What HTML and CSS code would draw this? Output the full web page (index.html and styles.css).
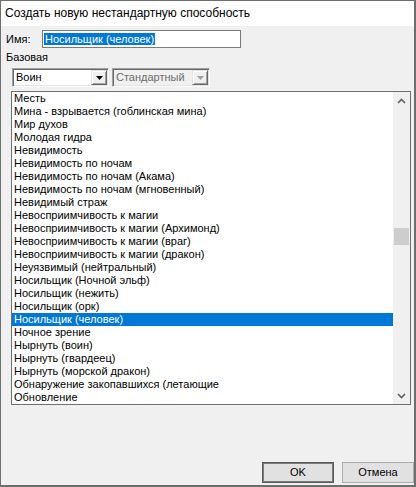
FILE: index.html
```html
<!DOCTYPE html>
<html>
<head>
<meta charset="utf-8">
<link rel="stylesheet" href="styles.css">
</head>
<body>
<div class="window">
  <div class="titlebar">Создать новую нестандартную способность</div>
  <div class="client">
    <div class="name-row">
      <span class="name-label">Имя:</span>
      <div class="textbox"><span class="sel">Носильщик (человек)</span></div>
    </div>
    <div class="base-label">Базовая</div>
    <div class="combo-row">
      <div class="combo combo-race">
        <span class="combo-text">Воин</span>
        <span class="combo-btn"><svg width="7" height="4" viewBox="0 0 7 4"><polygon points="0,0 7,0 3.5,4" fill="#000"/></svg></span>
      </div>
      <div class="combo combo-type disabled">
        <span class="combo-text">Стандартный</span>
        <span class="combo-btn"><svg width="7" height="4" viewBox="0 0 7 4"><polygon points="0,0 7,0 3.5,4" fill="#a0a0a0"/></svg></span>
      </div>
    </div>
    <div class="listbox">
      <div class="items">
        <div class="item">Месть</div>
        <div class="item">Мина - взрывается (гоблинская мина)</div>
        <div class="item">Мир духов</div>
        <div class="item">Молодая гидра</div>
        <div class="item">Невидимость</div>
        <div class="item">Невидимость по ночам</div>
        <div class="item">Невидимость по ночам (Акама)</div>
        <div class="item">Невидимость по ночам (мгновенный)</div>
        <div class="item">Невидимый страж</div>
        <div class="item">Невосприимчивость к магии</div>
        <div class="item">Невосприимчивость к магии (Архимонд)</div>
        <div class="item">Невосприимчивость к магии (враг)</div>
        <div class="item">Невосприимчивость к магии (дракон)</div>
        <div class="item">Неуязвимый (нейтральный)</div>
        <div class="item">Носильщик (Ночной эльф)</div>
        <div class="item">Носильщик (нежить)</div>
        <div class="item">Носильщик (орк)</div>
        <div class="item selected">Носильщик (человек)</div>
        <div class="item">Ночное зрение</div>
        <div class="item">Нырнуть (воин)</div>
        <div class="item">Нырнуть (гвардеец)</div>
        <div class="item">Нырнуть (морской дракон)</div>
        <div class="item">Обнаружение закопавшихся (летающие</div>
        <div class="item">Обновление</div>
      </div>
      <div class="scrollbar">
        <div class="sb-btn"><svg width="9" height="6" viewBox="0 0 9 6"><polyline points="1,5 4.5,1.5 8,5" fill="none" stroke="#606060" stroke-width="1.6"/></svg></div>
        <div class="sb-track"><div class="sb-thumb"></div></div>
        <div class="sb-btn"><svg width="9" height="6" viewBox="0 0 9 6"><polyline points="1,1 4.5,4.5 8,1" fill="none" stroke="#606060" stroke-width="1.6"/></svg></div>
      </div>
    </div>
    <div class="buttons">
      <div class="btn default">OK</div>
      <div class="btn">Отмена</div>
    </div>
  </div>
</div>
</body>
</html>
```

FILE: styles.css
```css
html, body {
  margin: 0;
  padding: 0;
}
body {
  width: 416px;
  height: 487px;
  overflow: hidden;
  font-family: "Liberation Sans", Arial, sans-serif;
  font-size: 11px;
  color: #000;
}
.window {
  box-sizing: border-box;
  width: 416px;
  height: 487px;
  border-top: 1px solid #6e6e6e;
  border-left: 1px solid #6e6e6e;
  border-right: 2px solid #6e6e6e;
  border-bottom: 2px solid #6e6e6e;
  display: flex;
  flex-direction: column;
  background: #f0f0f0;
}
.titlebar {
  height: 25px;
  flex: 0 0 25px;
  background: #fff;
  font-size: 12px;
  line-height: 25px;
  padding-left: 4px;
  white-space: nowrap;
}
.client {
  flex: 1;
  display: flex;
  flex-direction: column;
}
.name-row {
  display: flex;
  align-items: center;
  margin-top: 4px;
  padding-left: 5px;
}
.name-label {
  width: 36px;
  line-height: 13px;
}
.textbox {
  box-sizing: border-box;
  width: 199px;
  height: 18px;
  border: 1px solid #7a7a7a;
  background: #fff;
  padding: 2px 0 0 1px;
  line-height: 13px;
  white-space: nowrap;
}
.sel {
  background: #0078d7;
  color: #fff;
  padding: 0 1px;
}
.base-label {
  margin-top: 3px;
  padding-left: 5px;
  line-height: 13px;
  height: 13px;
}
.combo-row {
  display: flex;
  gap: 3px;
  margin-top: 4px;
  padding-left: 11px;
}
.combo {
  box-sizing: border-box;
  height: 19px;
  display: flex;
  align-items: center;
  border: 1px solid;
  border-color: #a0a0a0 #fff #fff #a0a0a0;
  box-shadow: inset 1px 1px 0 #696969, inset -1px -1px 0 #e3e3e3;
  background: #fff;
  padding: 1px;
}
.combo-race { width: 97px; }
.combo-type { width: 98px; }
.combo.disabled {
  background: #f0f0f0;
  color: #6d6d6d;
}
.combo-text {
  flex: 1;
  padding-left: 2px;
  line-height: 13px;
  white-space: nowrap;
}
.combo-btn {
  box-sizing: border-box;
  width: 16px;
  height: 15px;
  display: flex;
  align-items: center;
  justify-content: center;
  background: #f0f0f0;
  border: 1px solid;
  border-color: #e3e3e3 #696969 #696969 #e3e3e3;
  box-shadow: inset 1px 1px 0 #fff, inset -1px -1px 0 #a0a0a0;
}
.listbox {
  box-sizing: border-box;
  width: 400px;
  height: 314px;
  margin-top: 4px;
  margin-left: 10px;
  border: 1px solid #6e6e6e;
  background: #fff;
  display: flex;
}
.items {
  flex: 1;
  overflow: hidden;
}
.item {
  height: 13px;
  line-height: 13px;
  padding-left: 2px;
  white-space: nowrap;
}
.item.selected {
  background: #0078d7;
  color: #fff;
}
.scrollbar {
  width: 17px;
  flex: 0 0 17px;
  background: #f0f0f0;
  display: flex;
  flex-direction: column;
}
.sb-btn {
  height: 17px;
  flex: 0 0 17px;
  display: flex;
  align-items: center;
  justify-content: center;
}
.sb-track {
  flex: 1;
}
.sb-thumb {
  margin: 119px 1px 0 1px;
  height: 17px;
  background: #cdcdcd;
}
.buttons {
  margin-top: auto;
  margin-bottom: 2px;
  display: flex;
  justify-content: flex-end;
  gap: 8px;
  padding-right: 0;
}
.btn {
  box-sizing: border-box;
  width: 72px;
  height: 21px;
  background: #e1e1e1;
  border: 1px solid #adadad;
  display: flex;
  align-items: center;
  justify-content: center;
  line-height: 13px;
}
.btn.default {
  border: 1px solid #5a5a5a;
  box-shadow: inset 0 0 0 1px #7a7a7a;
}
```
